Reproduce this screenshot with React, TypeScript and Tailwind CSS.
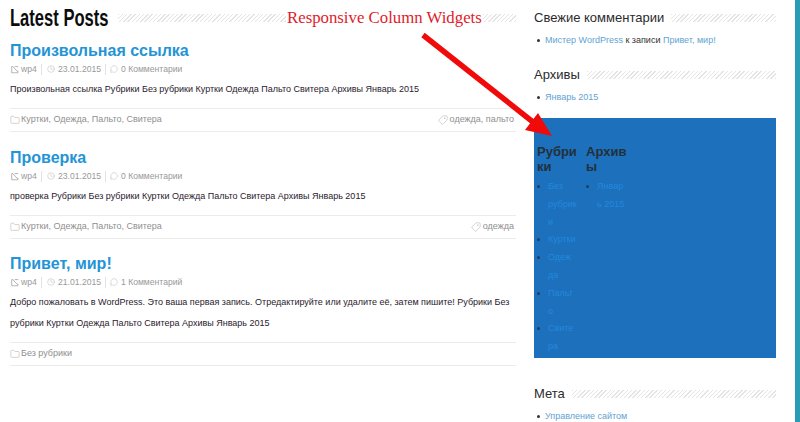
import React from "react";
import { Clock, MessageCircle, Folder, Tag } from "lucide-react";

const stripes = "bg-[repeating-linear-gradient(135deg,#e4e4e4_0,#e4e4e4_1px,#ffffff_1px,#ffffff_3px)]";

function AuthorIcon() {
  return (
    <svg width="8" height="9" viewBox="0 0 11 11" fill="none" stroke="#9a9a9a" strokeWidth="1" className="ml-[1px]">
      <path d="M3 1.5H1V10H9.5V7" />
      <path d="M3 2l6 6.5M5 1.5h5" />
    </svg>
  );
}

function Post({ title, date, comments, lines, cats, tags, gap }: { title: string; date: string; comments: string; lines: string[]; cats: string; tags?: string; gap: string }) {
  return (
    <article className={gap}>
      <h2 className="h-[20px] text-[16px] leading-[20px] font-bold text-[#2394d6]">{title}</h2>
      <div className="mt-[1px] flex h-[14px] items-center text-[8.6px] text-[#999999]">
        <AuthorIcon />
        <span className="ml-[2px] w-[15px]">wp4</span>
        <span className="mx-[5px] h-[11px] w-px bg-[#e2e2e2]" />
        <Clock size={8} strokeWidth={1} color="#999999" />
        <span className="ml-[3px] w-[42px] whitespace-nowrap">{date}</span>
        <span className="ml-[5px] mr-[4px] h-[11px] w-px bg-[#e2e2e2]" />
        <MessageCircle size={8} strokeWidth={1} color="#999999" />
        <span className="ml-[3px]">{comments}</span>
      </div>
      <div className="mt-[3px] text-[9px] leading-[21px] text-[#2a1a2e]">
        {lines.map((l) => (
          <div key={l} className="whitespace-nowrap">{l}</div>
        ))}
      </div>
      <div className="mt-[8px] flex h-[24px] items-center justify-between border-y border-[#ececec] pr-[2px] text-[9px] text-[#8f8f8f]">
        <div className="flex items-center">
          <Folder size={10} strokeWidth={1} color="#999999" />
          <span className="ml-[1px]">{cats}</span>
        </div>
        {tags && (
          <div className="flex items-center">
            <Tag size={10} strokeWidth={1} color="#999999" className="-scale-x-100" />
            <span className="ml-[2px]">{tags}</span>
          </div>
        )}
      </div>
    </article>
  );
}

function WidgetTitle({ children }: { children: React.ReactNode }) {
  return (
    <div className="flex h-[18px] items-center">
      <h3 className="text-[13px] leading-[18px] text-[#2b2b2b]">{children}</h3>
      <div className={`ml-[7px] h-[8px] flex-1 ${stripes}`} />
    </div>
  );
}

function Bullet({ children }: { children: React.ReactNode }) {
  return (
    <li className="flex text-[9px] leading-[18px] text-[#333333]">
      <span className="ml-[3px] mt-[8px] h-[3px] w-[3px] shrink-0 rounded-full bg-[#333333]" />
      <span className="ml-[5px]">{children}</span>
    </li>
  );
}

function PanelItem({ lines }: { lines: string[] }) {
  return (
    <li className="flex text-[9px] leading-[17.8px] text-[#2289dc]">
      <span className="mt-[7px] h-[3px] w-[3px] shrink-0 rounded-full bg-[#1c3f63]" />
      <span className="ml-[8px]">
        {lines.map((l) => (
          <div key={l}>{l}</div>
        ))}
      </span>
    </li>
  );
}

export default function App() {
  return (
    <div className="relative h-[422px] w-[800px] overflow-hidden bg-white font-['Liberation_Sans',Arial,sans-serif]">
      <div className="flex h-full">
        <main className="ml-[10px] w-[506px] pt-[6px]">
          <div className="flex h-[24px] items-center">
            <h1 className="w-[98px] whitespace-nowrap origin-left scale-x-[0.72] text-[23px] leading-[24px] font-bold text-[#0c0c0c]">Latest Posts</h1>
            <div className={`ml-[10px] h-[8px] flex-1 ${stripes}`} />
          </div>
          <div className="mt-[11px]">
            <Post gap="" title="Произвольная ссылка" date="23.01.2015" comments="0 Комментарии" lines={["Произвольная ссылка Рубрики Без рубрики Куртки Одежда Пальто Свитера Архивы Январь 2015"]} cats="Куртки, Одежда, Пальто, Свитера" tags="одежда, пальто" />
            <Post gap="mt-[16px]" title="Проверка" date="23.01.2015" comments="0 Комментарии" lines={["проверка Рубрики Без рубрики Куртки Одежда Пальто Свитера Архивы Январь 2015"]} cats="Куртки, Одежда, Пальто, Свитера" tags="одежда" />
            <Post gap="mt-[15px]" title="Привет, мир!" date="21.01.2015" comments="1 Комментарий" lines={["Добро пожаловать в WordPress. Это ваша первая запись. Отредактируйте или удалите её, затем пишите! Рубрики Без", "рубрики Куртки Одежда Пальто Свитера Архивы Январь 2015"]} cats="Без рубрики" />
          </div>
        </main>
        <aside className="ml-[18px] w-[242px] pt-[9px]">
          <WidgetTitle>Свежие комментарии</WidgetTitle>
          <ul className="mt-[4px]">
            <Bullet>
              <span className="text-[#5fa3d3]">Мистер WordPress</span> к записи <span className="text-[#5fa3d3]">Привет, мир!</span>
            </Bullet>
          </ul>
          <div className="mt-[17px]">
            <WidgetTitle>Архивы</WidgetTitle>
          </div>
          <ul className="mt-[4px]">
            <Bullet>
              <span className="text-[#5fa3d3]">Январь 2015</span>
            </Bullet>
          </ul>
          <section className="mt-[12px] flex h-[240px] gap-[7px] bg-[#1d70bc] pl-[3px] pt-[26px]">
            <div className="w-[42px]">
              <h3 className="text-[13px] leading-[15px] font-bold text-[#23303a]">Рубри<br />ки</h3>
              <ul className="mt-[4px]">
                <PanelItem lines={["Без", "рубрик", "и"]} />
                <PanelItem lines={["Куртки"]} />
                <PanelItem lines={["Одеж", "да"]} />
                <PanelItem lines={["Пальт", "о"]} />
                <PanelItem lines={["Свите", "ра"]} />
              </ul>
            </div>
            <div className="w-[42px]">
              <h3 className="text-[13px] leading-[15px] font-bold text-[#23303a]">Архив<br />ы</h3>
              <ul className="mt-[4px]">
                <PanelItem lines={["Январ", "ь 2015"]} />
              </ul>
            </div>
          </section>
          <div className="mt-[27px]">
            <WidgetTitle>Мета</WidgetTitle>
          </div>
          <ul className="mt-[4px]">
            <Bullet>
              <span className="text-[#5fa3d3]">Управление сайтом</span>
            </Bullet>
          </ul>
        </aside>
        <div className="ml-auto w-[5px] bg-[#2a9db6]" />
      </div>

      <div className="absolute left-[286px] top-[8px] bg-white px-[1px] text-[16.8px] leading-[20px] whitespace-nowrap font-['Liberation_Serif',serif] text-[#e01b2c]">Responsive Column Widgets</div>
      <svg className="absolute left-0 top-0" width="800" height="422" viewBox="0 0 800 422" fill="none">
        <path d="M423 35L538 126" stroke="#f00a0a" strokeWidth="5.5" />
        <polygon points="552,136 538,113 525,130" fill="#f00a0a" />
      </svg>
    </div>
  );
}
